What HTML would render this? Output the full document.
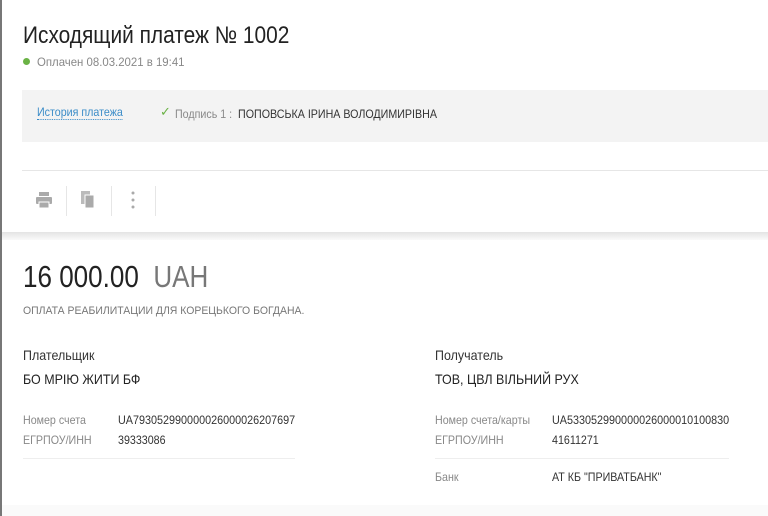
<!DOCTYPE html>
<html><head><meta charset="utf-8"><style>
body{margin:0;width:768px;height:516px;overflow:hidden;background:#fff;font-family:"Liberation Sans",sans-serif;position:relative}
.a{position:absolute;white-space:nowrap;transform-origin:0 0}
.c{transform:scaleX(.89)}
.g{color:#888}
</style></head><body>
<div style="position:absolute;left:0;top:0;width:2px;height:516px;background:#777"></div>
<div class="a" style="left:23px;top:22px;font-size:24px;color:#222;transform:scaleX(.87)">Исходящий платеж № 1002</div>
<div style="position:absolute;left:23px;top:58px;width:7px;height:7px;border-radius:50%;background:#6ab245"></div>
<div class="a" style="left:37px;top:55px;font-size:12px;color:#888;transform:scaleX(.95)">Оплачен 08.03.2021 в 19:41</div>
<div style="position:absolute;left:22px;top:90px;width:746px;height:52px;background:#f3f3f3"></div>
<div class="a c" style="left:37px;top:105px;font-size:12px;color:#3a8cc8;border-bottom:1px dotted #3a8cc8">История платежа</div>
<div class="a" style="left:160px;top:104px;font-size:13px;color:#6ab245">✓</div>
<div class="a" style="left:175px;top:107px;font-size:12px;color:#888;transform:scaleX(.89)">Подпись 1 :&nbsp; <span style="color:#333">ПОПОВСЬКА ІРИНА ВОЛОДИМИРІВНА</span></div>
<div style="position:absolute;left:22px;top:170px;width:746px;height:1px;background:#e6e6e6"></div>
<svg style="position:absolute;left:36px;top:191px" width="16" height="18" viewBox="0 0 16 18"><rect x="3" y="1" width="10" height="4" fill="#aaa"/><rect x="0" y="6" width="16" height="7" rx="1" fill="#aaa"/><rect x="3" y="11" width="10" height="6" fill="#aaa" stroke="#fff" stroke-width="1"/></svg>
<div style="position:absolute;left:66px;top:186px;width:1px;height:30px;background:#e6e6e6"></div>
<svg style="position:absolute;left:81px;top:191px" width="16" height="18"><rect x="0" y="0" width="9" height="13" fill="#bbb"/><rect x="4" y="4" width="9" height="13" fill="#aaa" stroke="#fff" stroke-width="1"/></svg>
<div style="position:absolute;left:111px;top:186px;width:1px;height:30px;background:#e6e6e6"></div>
<svg style="position:absolute;left:131px;top:191px" width="4" height="18"><circle cx="2" cy="2" r="1.5" fill="#aaa"/><circle cx="2" cy="9" r="1.5" fill="#aaa"/><circle cx="2" cy="16" r="1.5" fill="#aaa"/></svg>
<div style="position:absolute;left:155px;top:186px;width:1px;height:30px;background:#e6e6e6"></div>
<div style="position:absolute;left:2px;top:232px;width:766px;height:8px;background:linear-gradient(#e4e4e4,#fafafa)"></div>
<div class="a" style="left:23px;top:259px;font-size:31px;color:#222;transform:scaleX(.84)">16 000.00&nbsp; <span style="color:#777">UAH</span></div>
<div class="a" style="left:23px;top:305px;font-size:11px;color:#777;transform:scaleX(.95)">ОПЛАТА РЕАБИЛИТАЦИИ ДЛЯ КОРЕЦЬКОГО БОГДАНА.</div>
<div class="a c" style="left:23px;top:347px;font-size:14px;color:#333">Плательщик</div>
<div class="a c" style="left:23px;top:371px;font-size:14px;color:#222">БО МРІЮ ЖИТИ БФ</div>
<div class="a c g" style="left:23px;top:413px;font-size:12px">Номер счета</div>
<div class="a" style="left:118px;top:413px;font-size:12px;color:#333;transform:scaleX(.9)">UA793052990000026000026207697</div>
<div class="a c g" style="left:23px;top:433px;font-size:12px">ЕГРПОУ/ИНН</div>
<div class="a c" style="left:118px;top:433px;font-size:12px;color:#333">39333086</div>
<div style="position:absolute;left:23px;top:458px;width:272px;height:1px;background:#eee"></div>
<div class="a c" style="left:435px;top:347px;font-size:14px;color:#333">Получатель</div>
<div class="a c" style="left:435px;top:371px;font-size:14px;color:#222">ТОВ, ЦВЛ ВІЛЬНИЙ РУХ</div>
<div class="a c g" style="left:435px;top:413px;font-size:12px">Номер счета/карты</div>
<div class="a" style="left:552px;top:413px;font-size:12px;color:#333;transform:scaleX(.9)">UA533052990000026000010100830</div>
<div class="a c g" style="left:435px;top:433px;font-size:12px">ЕГРПОУ/ИНН</div>
<div class="a c" style="left:552px;top:433px;font-size:12px;color:#333">41611271</div>
<div style="position:absolute;left:435px;top:458px;width:294px;height:1px;background:#eee"></div>
<div class="a c g" style="left:435px;top:470px;font-size:12px">Банк</div>
<div class="a c" style="left:552px;top:470px;font-size:12px;color:#333">АТ КБ "ПРИВАТБАНК"</div>
<div style="position:absolute;left:2px;top:505px;width:766px;height:11px;background:#fafafa"></div>
</body></html>
